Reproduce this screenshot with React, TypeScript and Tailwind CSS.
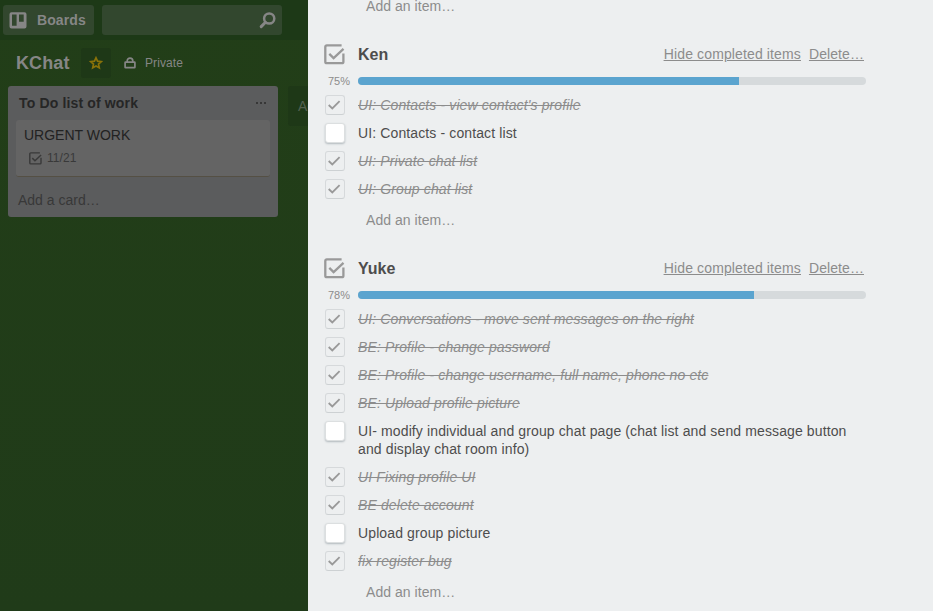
import React from "react";

type Item = { text: string; done: boolean };
type Checklist = { name: string; percent: number; items: Item[] };

const checklists: Checklist[] = [
  {
    name: "Ken",
    percent: 75,
    items: [
      { text: "UI: Contacts - view contact's profile", done: true },
      { text: "UI: Contacts - contact list", done: false },
      { text: "UI: Private chat list", done: true },
      { text: "UI: Group chat list", done: true },
    ],
  },
  {
    name: "Yuke",
    percent: 78,
    items: [
      { text: "UI: Conversations - move sent messages on the right", done: true },
      { text: "BE: Profile - change password", done: true },
      { text: "BE: Profile - change username, full name, phone no etc", done: true },
      { text: "BE: Upload profile picture", done: true },
      {
        text: "UI- modify individual and group chat page (chat list and send message button and display chat room info)",
        done: false,
      },
      { text: "UI Fixing profile UI", done: true },
      { text: "BE delete account", done: true },
      { text: "Upload group picture", done: false },
      { text: "fix register bug", done: true },
    ],
  },
];

function ChecklistIcon({ className }: { className: string }) {
  return (
    <svg viewBox="0 0 21 21" fill="none" stroke="currentColor" className={className}>
      <path d="M17.6 1.4H2.8a1.5 1.5 0 0 0-1.5 1.5v14.8a1.5 1.5 0 0 0 1.5 1.5h15.1a1.5 1.5 0 0 0 1.5-1.5V9.4" strokeWidth="2.3" />
      <path d="M5.3 9.9l4.3 4.2L19.5 4.9" strokeWidth="2.3" />
    </svg>
  );
}

function Checkbox({ done }: { done: boolean }) {
  if (!done) {
    return <span className="h-5 w-5 shrink-0 rounded-[3px] border border-[#dcdfe0] bg-white shadow-[0_1px_2px_#b2b9bd]" />;
  }
  return (
    <span className="flex h-5 w-5 shrink-0 items-center justify-center rounded-[3px] border border-[#d6d9db] border-b-[#cdd1d3] bg-[#edeff0] pr-[2px]">
      <svg viewBox="0 0 14 12" className="h-3 w-3.5 text-[#999]" fill="none" stroke="currentColor" strokeWidth="1.8">
        <path d="M1.7 6l3.6 3.5L12.6 2.2" />
      </svg>
    </span>
  );
}

function AddItem() {
  return <div className="h-[34px] pl-[58px] leading-[34px] tracking-[0.05px] text-[#8c8c8c]">Add an item…</div>;
}

function ChecklistBlock({ list }: { list: Checklist }) {
  return (
    <section className="mb-[17px]">
      <div className="flex h-7 items-center pl-4">
        <ChecklistIcon className="h-[21px] w-[21px] text-[#999]" />
        <h3 className="ml-[13px] grow pt-[2px] text-base font-bold leading-5 text-[#4d4d4d]">{list.name}</h3>
        <div className="flex gap-2 pr-[2px] text-[#8c8c8c] underline">
          <a className="tracking-[0.13px]">Hide completed items</a>
          <a className="tracking-[0.08px]">Delete…</a>
        </div>
      </div>
      <div className="mt-1 flex h-[18px] items-center">
        <span className="w-[42px] pt-px text-right text-[11px] text-[#8c8c8c]">{list.percent}%</span>
        <div className="ml-2 h-2 grow overflow-hidden rounded-full bg-[#d6dadc]">
          <div className="h-full bg-[#5ba4cf]" style={{ width: `${list.percent}%` }} />
        </div>
      </div>
      <ul className="mt-px tracking-[0.12px]">
        {list.items.map((item) => (
          <li key={item.text} className="flex gap-[13px] py-1 pl-[17px]">
            <Checkbox done={item.done} />
            <span
              className={
                item.done
                  ? "my-px italic leading-[18px] text-[#8c8c8c] line-through"
                  : "my-px leading-[18px] text-[#4d4d4d]"
              }
            >
              {item.text}
            </span>
          </li>
        ))}
      </ul>
      <AddItem />
    </section>
  );
}

function TopBar() {
  return (
    <header className="flex h-10 gap-2 bg-[#1d3917] pt-[5px] pl-[3px]">
      <div className="flex h-[30px] w-[91px] items-center rounded-[3px] bg-[#32472e] pl-[6px] text-[#868686]">
        <svg viewBox="0 0 18 17" className="h-[17px] w-[18px]">
          <path
            fill="currentColor"
            fillRule="evenodd"
            d="M2.5 .2h13q2 0 2 2v12.3q0 2-2 2h-13q-2 0-2-2V2.2q0-2 2-2zM3 2.6v11.2h4.6V2.6zM10 2.6v7.2h4.7V2.6z"
          />
        </svg>
        <span className="ml-[10px] font-bold tracking-[0.1px]">Boards</span>
      </div>
      <div className="flex h-[30px] w-[180px] items-center justify-end rounded-[3px] bg-[#32472e] pr-[6px]">
        <svg viewBox="0 0 17 17" className="h-[17px] w-[17px] text-[#868686]" fill="none" stroke="currentColor">
          <circle cx="10.2" cy="6.5" r="5.1" strokeWidth="2.5" />
          <path d="M6.5 10.3L2.2 14.6" strokeWidth="3" strokeLinecap="round" />
        </svg>
      </div>
    </header>
  );
}

function BoardHeader() {
  return (
    <div className="flex h-[46px] items-center pl-4 text-[#868686]">
      <h1 className="w-[65px] text-lg font-bold tracking-[0.1px]">KChat</h1>
      <span className="flex h-[30px] w-[30px] items-center justify-center rounded-[3px] bg-[#1e3817]">
        <svg viewBox="0 0 14 14" className="h-3.5 w-3.5 text-[#8a7209]" fill="none" stroke="currentColor" strokeWidth="1.7">
          <path d="M7 1.8l1.55 3.4 3.7.4-2.75 2.5.8 3.7L7 9.9l-3.3 1.9.8-3.7L1.75 5.6l3.7-.4z" />
        </svg>
      </span>
      <svg viewBox="0 0 12 12" className="ml-[13px] h-3 w-3" fill="none" stroke="currentColor" strokeWidth="1.7">
        <rect x="1.1" y="5.1" width="9.8" height="5.6" rx="0.5" />
        <path d="M3.2 5V3.9a2.8 2.8 0 0 1 5.6 0V5" />
      </svg>
      <span className="ml-[9px] text-xs tracking-[0.1px]">Private</span>
    </div>
  );
}

function BoardList() {
  return (
    <div className="h-[131px] w-[270px] shrink-0 rounded-[3px] bg-[#5b5c5d]">
      <div className="flex h-[34px] items-center justify-between pl-[11px] pr-3">
        <h2 className="font-bold tracking-[0.15px] text-[#262626]">To Do list of work</h2>
        <span className="flex gap-[2px]">
          <i className="h-[2px] w-[2px] bg-[#373737]" />
          <i className="h-[2px] w-[2px] bg-[#373737]" />
          <i className="h-[2px] w-[2px] bg-[#373737]" />
        </span>
      </div>
      <div className="mx-2 h-[57px] rounded-[3px] border-b border-[#555044] bg-[#646464] pl-2 pt-[6px]">
        <div className="leading-[18px] text-[#222]">URGENT WORK</div>
        <div className="mt-[5px] flex h-[18px] items-center pl-[5px] text-xs text-[#393939]">
          <ChecklistIcon className="h-[13px] w-[13px]" />
          <span className="ml-[5px] tracking-[0.05px]">11/21</span>
        </div>
      </div>
      <div className="mt-[14px] pl-[10px] leading-[18px] text-[#383838]">Add a card…</div>
    </div>
  );
}

export default function App() {
  return (
    <div className="flex h-[611px] w-[933px] overflow-hidden bg-[#213c19] font-['Liberation_Sans',Arial,sans-serif] text-sm">
      <aside className="h-full w-[308px] shrink-0 overflow-hidden bg-linear-to-b from-[#223e18] to-[#203b19]">
        <TopBar />
        <BoardHeader />
        <div className="flex gap-[10px] pl-2">
          <BoardList />
          <div className="h-10 w-[270px] shrink-0 rounded-[3px] bg-[#1e3817] pl-[10px] leading-10 text-[#546251]">Add a list…</div>
        </div>
      </aside>
      <main className="h-full grow overflow-hidden bg-[#edeff0] pr-[67px]">
        <div className="-mt-[11px] mb-[17px]">
          <AddItem />
        </div>
        {checklists.map((list) => (
          <ChecklistBlock key={list.name} list={list} />
        ))}
      </main>
    </div>
  );
}
